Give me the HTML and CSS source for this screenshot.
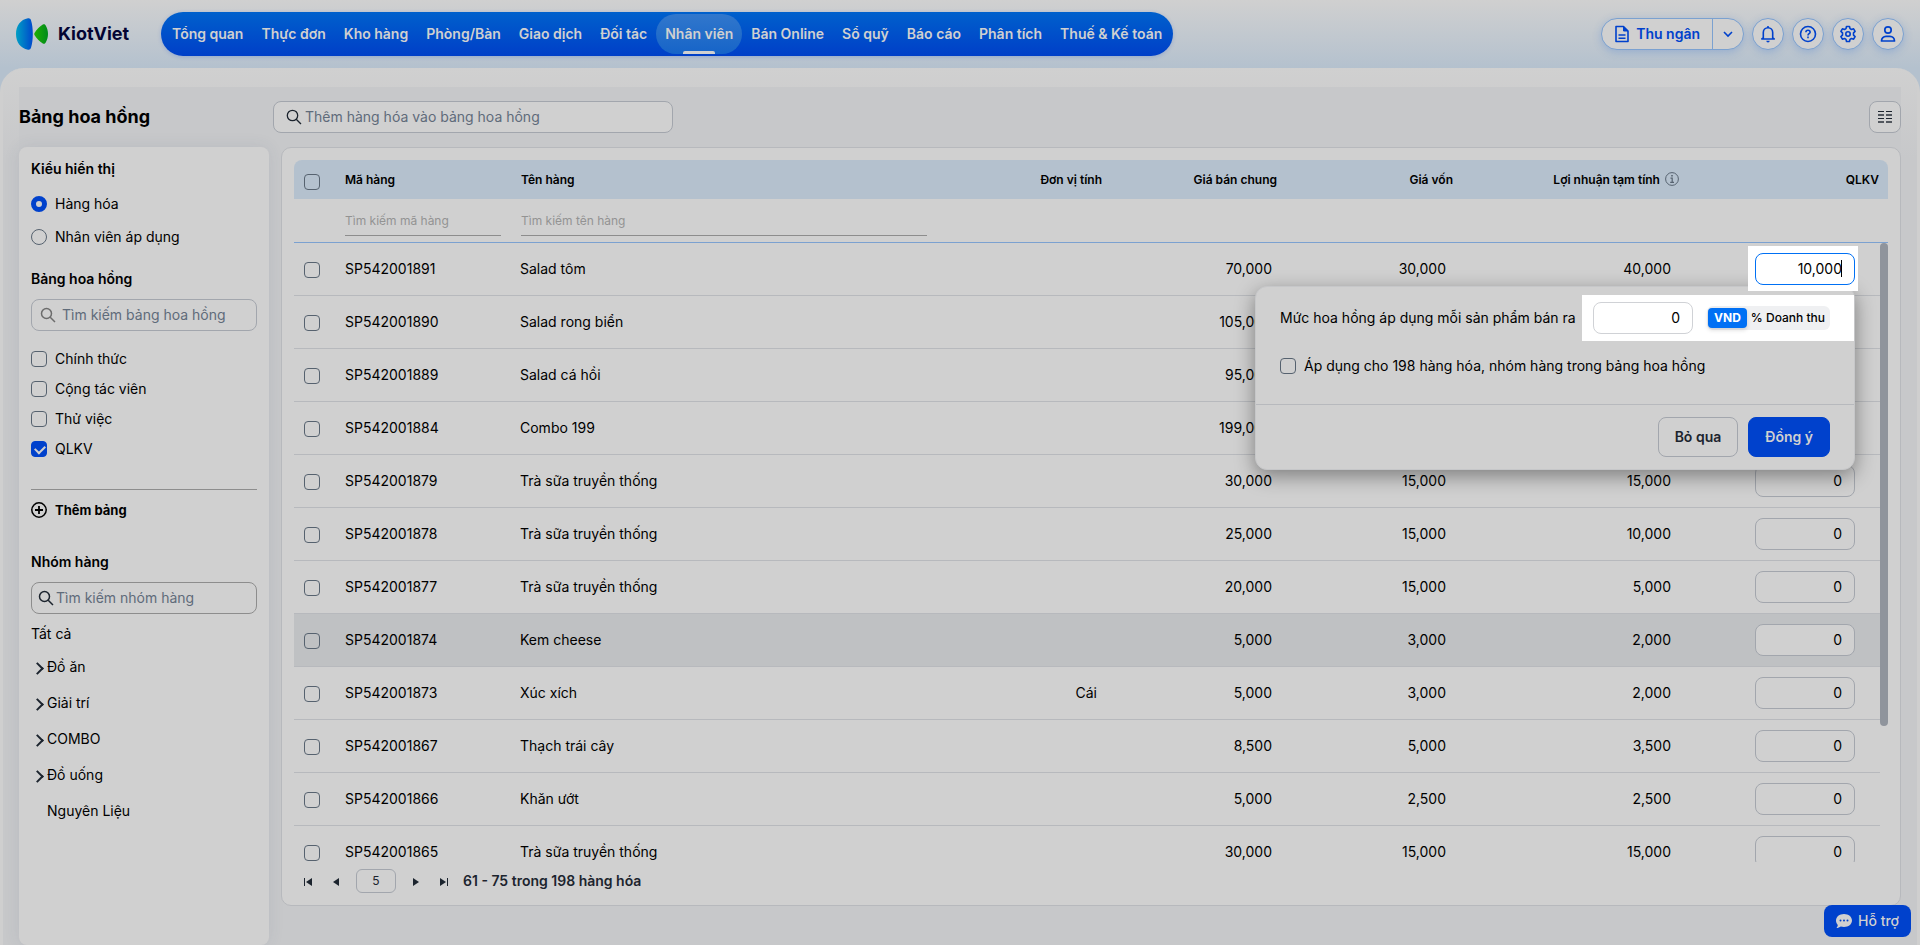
FILE: index.html
```html
<!DOCTYPE html>
<html lang="vi">
<head>
    <meta charset="UTF-8">
    <meta name="viewport" content="width=device-width, initial-scale=1.0">
    <title>KiotViet - Bảng hoa hồng</title>
    <link rel="stylesheet" href="styles.css">
</head>
<body>
    <header class="topbar">
        <a class="logo" href="#">
            <svg width="32" height="32" viewBox="0 0 32 32" aria-hidden="true">
                <defs>
                    <linearGradient id="logoBlue" x1="0" y1="0" x2="1" y2="0">
                        <stop offset="0" stop-color="#009fc4"/>
                        <stop offset="1" stop-color="#0048cc"/>
                    </linearGradient>
                    <linearGradient id="logoGreen" x1="0" y1="0" x2="1" y2="0">
                        <stop offset="0" stop-color="#1fb000"/>
                        <stop offset="1" stop-color="#008a1c"/>
                    </linearGradient>
                </defs>
                <path d="M12 .3C4.500 1.500 0 8 0 16s4.500 14.500 12 15.700c1.500.3 2.500-.4 3-1.900 1.200-3.800 1.800-8.300 1.800-13.800S16.200 6 15 2.200C14.500.7 13.500 0 12 .3z" fill="url(#logoBlue)"/>
                <path d="M18.500 15c2-3.500 5-6.600 8.300-8.500 1.200-.7 2.300-.3 2.900 1C31.200 10 32 13 32 16s-.8 6-2.300 8.500c-.6 1.300-1.700 1.700-2.900 1-3.300-1.900-6.300-5-8.300-8.500-.4-.7-.4-1.300 0-2z" fill="url(#logoGreen)"/>
            </svg>
            <span>KiotViet</span>
        </a>
        <nav class="main-nav">
            <a href="#">Tổng quan</a>
            <a href="#">Thực đơn</a>
            <a href="#">Kho hàng</a>
            <a href="#">Phòng/Bàn</a>
            <a href="#">Giao dịch</a>
            <a href="#">Đối tác</a>
            <a href="#" class="active">Nhân viên</a>
            <a href="#">Bán Online</a>
            <a href="#">Sổ quỹ</a>
            <a href="#">Báo cáo</a>
            <a href="#">Phân tích</a>
            <a href="#">Thuế &amp; Kế toán</a>
        </nav>
        <div class="top-actions">
            <div class="cashier">
                <button type="button" class="cashier-btn">
                    <svg width="16" height="18" viewBox="0 0 16 18" fill="none" stroke="currentColor" stroke-width="1.600" stroke-linejoin="round"><path d="M2 1.500h7.500L14 6v10.500H2z"/><path d="M9.500 1.500V6H14z" fill="currentColor" stroke-width="1"/><path d="M4.500 10h7M4.500 13.200h7"/></svg>
                    Thu ngân
                </button>
                <button type="button" class="cashier-more" aria-label="Mở rộng">
                    <svg width="12" height="12" viewBox="0 0 12 12" fill="none" stroke="currentColor" stroke-width="1.600"><path d="M2 4l4 4 4-4"/></svg>
                </button>
            </div>
            <button type="button" class="round-btn" aria-label="Thông báo">
                <svg width="16" height="18" viewBox="0 0 16 18" fill="none" stroke="currentColor" stroke-width="1.600" stroke-linejoin="round"><path d="M3.300 13V7.500a4.700 4.700 0 0 1 9.400 0V13l1.500 1H1.800z"/><path d="M8 1v2"/><path d="M6.300 15.800h3.400a1.700 1.700 0 0 1-3.400 0z" fill="currentColor" stroke="none"/></svg>
            </button>
            <button type="button" class="round-btn" aria-label="Trợ giúp">
                <svg width="18" height="18" viewBox="0 0 18 18" fill="none" stroke="currentColor" stroke-width="1.600"><circle cx="9" cy="9" r="7.500"/><path d="M6.900 7.300c0-1.200.9-2 2.100-2s2.100.8 2.100 1.900c0 1.500-2.100 1.600-2.100 3.200"/><path d="M9 11.600v1.600"/></svg>
            </button>
            <button type="button" class="round-btn" aria-label="Thiết lập">
                <svg width="18" height="18" viewBox="0 0 18 18" fill="none" stroke="currentColor" stroke-width="1.600" stroke-linejoin="round"><path d="M7.500 1.500h3l.5 2.100 1.500.9 2.100-.7 1.500 2.600-1.600 1.500v2.200l1.600 1.500-1.500 2.600-2.100-.7-1.500.9-.5 2.100h-3L7 14.400l-1.500-.9-2.100.7-1.500-2.600 1.600-1.500V7.900L1.900 6.400l1.500-2.600 2.100.7L7 3.600z"/><circle cx="9" cy="9" r="2.200"/></svg>
            </button>
            <button type="button" class="round-btn" aria-label="Tài khoản">
                <svg width="18" height="18" viewBox="0 0 18 18" fill="none" stroke="currentColor" stroke-width="1.700" stroke-linejoin="round"><circle cx="9" cy="5" r="3.200"/><path d="M2.500 16c0-2.800 2-4.700 4.500-4.700h4c2.500 0 4.500 1.900 4.500 4.700z"/></svg>
            </button>
        </div>
    </header>

    <main class="page">
        <div class="page-head">
            <h1>Bảng hoa hồng</h1>
            <label class="search page-search">
                <svg width="16" height="16" viewBox="0 0 16 16" fill="none" stroke="currentColor" stroke-width="1.300"><circle cx="6.500" cy="6.500" r="5.200"/><path d="M10.200 10.200L15 15"/></svg>
                <input type="text" placeholder="Thêm hàng hóa vào bảng hoa hồng" aria-label="Thêm hàng hóa vào bảng hoa hồng">
            </label>
            <button type="button" class="column-btn" aria-label="Chọn cột">
                <svg width="14" height="14" viewBox="0 0 14 14" fill="currentColor"><path d="M0 1h6v1H0zM8 1h6v1H8zM0 8h6v1H0zM8 8h6v1H8z"/><path d="M0 4h6v2H0zM8 4h6v2H8zM0 11h6v2H0zM8 11h6v2H8z" opacity=".7"/></svg>
            </button>
        </div>

        <div class="page-body">
            <aside class="sidebar">
                <section class="view-type">
                    <h2>Kiểu hiển thị</h2>
                    <label><input type="radio" name="view" checked> Hàng hóa</label>
                    <label><input type="radio" name="view"> Nhân viên áp dụng</label>
                </section>
                <section class="boards">
                    <h2>Bảng hoa hồng</h2>
                    <label class="search side-search muted">
                        <svg width="16" height="16" viewBox="0 0 16 16" fill="none" stroke="currentColor" stroke-width="1.500"><circle cx="6.500" cy="6.500" r="5"/><path d="M10.200 10.200L15 15"/></svg>
                        <input type="text" placeholder="Tìm kiếm bảng hoa hồng" aria-label="Tìm kiếm bảng hoa hồng">
                    </label>
                    <div class="board-list">
                        <label><input type="checkbox"> Chính thức</label>
                        <label><input type="checkbox"> Cộng tác viên</label>
                        <label><input type="checkbox"> Thử việc</label>
                        <label><input type="checkbox" checked> QLKV</label>
                    </div>
                    <button type="button" class="add-board">
                        <svg width="16" height="16" viewBox="0 0 16 16" fill="none" stroke="currentColor" stroke-width="1.500"><circle cx="8" cy="8" r="7.200"/><path d="M8 4v8M4 8h8" stroke-width="1.800"/></svg>
                        Thêm bảng
                    </button>
                </section>
                <section class="groups">
                    <h2>Nhóm hàng</h2>
                    <label class="search side-search tight">
                        <svg width="16" height="16" viewBox="0 0 16 16" fill="none" stroke="currentColor" stroke-width="1.500"><circle cx="6.500" cy="6.500" r="5"/><path d="M10.200 10.200L15 15"/></svg>
                        <input type="text" placeholder="Tìm kiếm nhóm hàng" aria-label="Tìm kiếm nhóm hàng">
                    </label>
                    <a href="#" class="all-groups">Tất cả</a>
                    <ul>
                        <li class="parent"><a href="#">Đồ ăn</a></li>
                        <li class="parent"><a href="#">Giải trí</a></li>
                        <li class="parent"><a href="#">COMBO</a></li>
                        <li class="parent"><a href="#">Đồ uống</a></li>
                        <li><a href="#">Nguyên Liệu</a></li>
                    </ul>
                </section>
            </aside>

            <section class="grid-card">
                <table class="grid-head">
                    <colgroup>
                        <col class="c-check"><col class="c-code"><col><col class="c-unit"><col class="c-price"><col class="c-cost"><col class="c-profit"><col class="c-board">
                    </colgroup>
                    <thead>
                        <tr class="titles">
                            <th><input type="checkbox" aria-label="Chọn tất cả"></th>
                            <th>Mã hàng</th>
                            <th class="name">Tên hàng</th>
                            <th class="num">Đơn vị tính</th>
                            <th class="num">Giá bán chung</th>
                            <th class="num">Giá vốn</th>
                            <th class="num">Lợi nhuận tạm tính
                                <svg class="info" width="14" height="14" viewBox="0 0 14 14" fill="none" stroke="currentColor"><circle cx="7" cy="7" r="6.400"/><path d="M5.500 6.200H7.200v4M5.200 10.300h3.800" stroke-width="1.200"/><path d="M7 3v1.600" stroke-width="1.600"/></svg>
                            </th>
                            <th class="num">QLKV</th>
                        </tr>
                        <tr class="filters">
                            <td></td>
                            <td><input type="text" placeholder="Tìm kiếm mã hàng" aria-label="Tìm kiếm mã hàng"></td>
                            <td class="name"><input type="text" placeholder="Tìm kiếm tên hàng" aria-label="Tìm kiếm tên hàng"></td>
                            <td colspan="5"></td>
                        </tr>
                    </thead>
                </table>

                <div class="grid-body">
                    <div class="grid-scroll">
                        <table class="grid-rows">
                            <colgroup>
                                <col class="c-check"><col class="c-code"><col><col class="c-unit"><col class="c-price"><col class="c-cost"><col class="c-profit"><col class="c-board">
                            </colgroup>
                            <tbody>
                                <tr>
                                    <td><input type="checkbox" aria-label="SP542001891"></td><td>SP542001891</td><td>Salad tôm</td><td class="num"></td><td class="num">70,000</td><td class="num">30,000</td><td class="num">40,000</td>
                                    <td class="board"><span class="editing"><input type="text" value="10,000" aria-label="Hoa hồng SP542001891"></span></td>
                                </tr>
                                <tr>
                                    <td><input type="checkbox" aria-label="SP542001890"></td><td>SP542001890</td><td>Salad rong biển</td><td class="num"></td><td class="num">105,000</td><td class="num"></td><td class="num"></td>
                                    <td class="board"><input type="text" value="0" aria-label="Hoa hồng SP542001890"></td>
                                </tr>
                                <tr>
                                    <td><input type="checkbox" aria-label="SP542001889"></td><td>SP542001889</td><td>Salad cá hồi</td><td class="num"></td><td class="num">95,000</td><td class="num"></td><td class="num"></td>
                                    <td class="board"><input type="text" value="0" aria-label="Hoa hồng SP542001889"></td>
                                </tr>
                                <tr>
                                    <td><input type="checkbox" aria-label="SP542001884"></td><td>SP542001884</td><td>Combo 199</td><td class="num"></td><td class="num">199,000</td><td class="num"></td><td class="num"></td>
                                    <td class="board"><input type="text" value="0" aria-label="Hoa hồng SP542001884"></td>
                                </tr>
                                <tr>
                                    <td><input type="checkbox" aria-label="SP542001879"></td><td>SP542001879</td><td>Trà sữa truyền thống</td><td class="num"></td><td class="num">30,000</td><td class="num">15,000</td><td class="num">15,000</td>
                                    <td class="board"><input type="text" value="0" aria-label="Hoa hồng SP542001879"></td>
                                </tr>
                                <tr>
                                    <td><input type="checkbox" aria-label="SP542001878"></td><td>SP542001878</td><td>Trà sữa truyền thống</td><td class="num"></td><td class="num">25,000</td><td class="num">15,000</td><td class="num">10,000</td>
                                    <td class="board"><input type="text" value="0" aria-label="Hoa hồng SP542001878"></td>
                                </tr>
                                <tr>
                                    <td><input type="checkbox" aria-label="SP542001877"></td><td>SP542001877</td><td>Trà sữa truyền thống</td><td class="num"></td><td class="num">20,000</td><td class="num">15,000</td><td class="num">5,000</td>
                                    <td class="board"><input type="text" value="0" aria-label="Hoa hồng SP542001877"></td>
                                </tr>
                                <tr class="hovered">
                                    <td><input type="checkbox" aria-label="SP542001874"></td><td>SP542001874</td><td>Kem cheese</td><td class="num"></td><td class="num">5,000</td><td class="num">3,000</td><td class="num">2,000</td>
                                    <td class="board"><input type="text" value="0" aria-label="Hoa hồng SP542001874"></td>
                                </tr>
                                <tr>
                                    <td><input type="checkbox" aria-label="SP542001873"></td><td>SP542001873</td><td>Xúc xích</td><td class="num">Cái</td><td class="num">5,000</td><td class="num">3,000</td><td class="num">2,000</td>
                                    <td class="board"><input type="text" value="0" aria-label="Hoa hồng SP542001873"></td>
                                </tr>
                                <tr>
                                    <td><input type="checkbox" aria-label="SP542001867"></td><td>SP542001867</td><td>Thạch trái cây</td><td class="num"></td><td class="num">8,500</td><td class="num">5,000</td><td class="num">3,500</td>
                                    <td class="board"><input type="text" value="0" aria-label="Hoa hồng SP542001867"></td>
                                </tr>
                                <tr>
                                    <td><input type="checkbox" aria-label="SP542001866"></td><td>SP542001866</td><td>Khăn ướt</td><td class="num"></td><td class="num">5,000</td><td class="num">2,500</td><td class="num">2,500</td>
                                    <td class="board"><input type="text" value="0" aria-label="Hoa hồng SP542001866"></td>
                                </tr>
                                <tr>
                                    <td><input type="checkbox" aria-label="SP542001865"></td><td>SP542001865</td><td>Trà sữa truyền thống</td><td class="num"></td><td class="num">30,000</td><td class="num">15,000</td><td class="num">15,000</td>
                                    <td class="board"><input type="text" value="0" aria-label="Hoa hồng SP542001865"></td>
                                </tr>
                            </tbody>
                        </table>
                    </div>
                    <div class="scroll-thumb"></div>

                    <div class="popup">
                        <div class="popup-row">
                            <label for="rate">Mức hoa hồng áp dụng mỗi sản phẩm bán ra</label>
                            <div class="rate">
                                <input type="text" id="rate" value="0">
                                <div class="unit-switch">
                                    <button type="button" class="on">VND</button>
                                    <button type="button">% Doanh thu</button>
                                </div>
                            </div>
                        </div>
                        <label class="apply-all"><input type="checkbox"> Áp dụng cho 198 hàng hóa, nhóm hàng trong bảng hoa hồng</label>
                        <div class="popup-foot">
                            <button type="button" class="btn">Bỏ qua</button>
                            <button type="button" class="btn primary">Đồng ý</button>
                        </div>
                    </div>
                </div>

                <div class="pager">
                    <button type="button" aria-label="Trang đầu"><svg width="8" height="8" viewBox="0 0 8 8" fill="currentColor"><path d="M0 0h1v8H0zM8 0v8L2 4z"/></svg></button>
                    <button type="button" aria-label="Trang trước"><svg width="8" height="8" viewBox="0 0 8 8" fill="currentColor"><path d="M7 0v8L1 4z"/></svg></button>
                    <input type="text" value="5" aria-label="Trang">
                    <button type="button" aria-label="Trang sau"><svg width="8" height="8" viewBox="0 0 8 8" fill="currentColor"><path d="M1 0v8l6-4z"/></svg></button>
                    <button type="button" aria-label="Trang cuối"><svg width="8" height="8" viewBox="0 0 8 8" fill="currentColor"><path d="M7 0h1v8H7zM0 0v8l6-4z"/></svg></button>
                    <span>61 - 75 trong 198 hàng hóa</span>
                </div>
            </section>
        </div>
    </main>

    <button type="button" class="support">
        <svg width="16" height="14" viewBox="0 0 16 14" aria-hidden="true"><path d="M8 0c4.500 0 8 2.800 8 6.500S12.500 13 8 13c-1.100 0-2.200-.2-3.200-.5C3.700 13.300 2 14 .4 14c.7-.8 1.300-2 1.400-3.100C.7 9.700 0 8.200 0 6.500 0 2.800 3.500 0 8 0z" fill="currentColor"/><g fill="#0041cc"><circle cx="4.500" cy="6.500" r="1"/><circle cx="8" cy="6.500" r="1"/><circle cx="11.500" cy="6.500" r="1"/></g></svg>
        Hỗ trợ
    </button>
</body>
</html>
```

FILE: styles.css
```css
* {
    box-sizing: border-box;
}
body {
    margin: 0;
    height: 100vh;
    display: flex;
    flex-direction: column;
    overflow: hidden;
    background: linear-gradient(#d0d0d0, #b4c1ce 68px);
    color: #000;
    font-family: Inter, "Noto Sans", sans-serif;
    font-size: 14px;
    line-height: 20px;
}
a {
    color: inherit;
    text-decoration: none;
}
h1, h2, ul {
    margin: 0;
    padding: 0;
}
button, input {
    font: inherit;
    color: inherit;
}
button {
    padding: 0;
    border: none;
    background: none;
    cursor: pointer;
}
svg {
    flex: none;
}

/* tick boxes and radios */
input[type="checkbox"], input[type="radio"] {
    appearance: none;
    flex: none;
    position: relative;
    width: 16px;
    height: 16px;
    margin: 0;
    border: 1px solid #56626f;
    border-radius: 4px;
    vertical-align: middle;
}
input[type="radio"] {
    border-radius: 50%;
}
input[type="radio"]:checked {
    border: 5px solid #0041cc;
}
input[type="checkbox"]:checked {
    background: #0041cc;
    border-color: #0041cc;
}
input[type="checkbox"]:checked::after {
    content: "";
    position: absolute;
    left: 3px;
    top: 3px;
    width: 8px;
    height: 5px;
    border-left: 2px solid #d0d0d0;
    border-bottom: 2px solid #d0d0d0;
    transform: rotate(-45deg);
}

/* top bar */
.topbar {
    height: 68px;
    flex: none;
    display: flex;
    align-items: center;
    padding: 0 16px;
}
.logo {
    display: flex;
    align-items: center;
    gap: 10px;
    width: 145px;
    font-size: 18px;
    font-weight: 700;
    color: #040433;
}
.main-nav {
    display: flex;
    height: 44px;
    padding: 2px;
    border-radius: 22px;
    background: linear-gradient(#0060cc, #003fc8);
    box-shadow: 0 1px 4px rgba(0, 65, 204, 0.2);
    color: #d0d0d0;
    font-weight: 600;
}
.main-nav a {
    position: relative;
    padding: 0 9px;
    line-height: 40px;
    border-radius: 20px;
    white-space: nowrap;
}
.main-nav .active {
    background: linear-gradient(#3177cc, #1664c8);
}
.main-nav .active::after {
    content: "";
    position: absolute;
    left: 50%;
    bottom: 0;
    width: 32px;
    height: 3px;
    margin-left: -16px;
    border-radius: 2px 2px 0 0;
    background: #d0d0d0;
}
.top-actions {
    margin-left: auto;
    display: flex;
    gap: 8px;
    color: #0041cc;
}
.cashier, .round-btn {
    height: 32px;
    border: 1px solid #7ba1d0;
    border-radius: 16px;
    background: #d0d0d0;
    box-shadow: 0 2px 8px rgba(60, 120, 210, 0.3);
}
.cashier {
    display: flex;
}
.cashier-btn {
    display: flex;
    align-items: center;
    gap: 6px;
    padding: 0 12px;
    font-weight: 600;
}
.cashier-more {
    width: 31px;
    border-left: 1px solid #7ba1d0;
}
.round-btn {
    width: 32px;
    display: flex;
    align-items: center;
    justify-content: center;
}
.cashier-more svg {
    display: block;
    margin: 0 auto;
}

/* page */
.page {
    flex: 1;
    min-height: 0;
    display: flex;
    flex-direction: column;
    padding: 19px 16px 0;
    border: 3px solid #cfcfcf;
    border-width: 0 3px;
    border-radius: 24px 24px 0 0;
    background: linear-gradient(#d0d0d0, #c7c8ca 90px);
}
.page-head {
    display: flex;
    align-items: center;
    height: 60px;
    flex: none;
    background: #c7c8ca;
}
.page-head h1 {
    width: 254px;
    font-size: 18px;
    font-weight: 700;
}
.search {
    display: flex;
    align-items: center;
    gap: 3px;
    height: 32px;
    padding: 0 12px;
    border: 1px solid #a2a6ad;
    border-radius: 8px;
    color: #1c242e;
}
.search input {
    flex: 1;
    min-width: 0;
    padding: 0;
    border: none;
    outline: none;
    background: none;
}
::placeholder {
    color: #5f6b7a;
    opacity: 1;
}
.page-search {
    width: 400px;
    background: #d0d0d0;
}
.column-btn {
    width: 32px;
    height: 32px;
    margin-left: auto;
    border: 1px solid #a2a6ad;
    border-radius: 8px;
    background: #d0d0d0;
    color: #1c242e;
}
.column-btn svg {
    display: block;
    margin: 0 auto;
}
.page-body {
    flex: 1;
    min-height: 0;
    display: flex;
    align-items: stretch;
    gap: 12px;
    background: #c7c8ca;
}

/* sidebar */
.sidebar {
    width: 250px;
    flex: none;
    padding: 12px;
    border-radius: 8px;
    background: #d0d0d0;
    box-shadow: 0 0 16px rgba(60, 80, 110, 0.1);
}
.sidebar h2 {
    font-size: 14px;
    line-height: 20px;
    font-weight: 600;
}
.view-type label, .board-list label {
    display: flex;
    align-items: center;
    gap: 8px;
}
.view-type label {
    height: 33px;
}
.view-type h2 {
    margin-bottom: 8px;
}
.boards {
    margin-top: 16px;
}
.side-search {
    margin-top: 10px;
    gap: 6px;
    padding: 0 8px;
}
.side-search.muted svg {
    color: #6c6c6c;
}
.side-search.tight {
    padding: 0 6px;
    gap: 2px;
    border-color: #8d8d8d;
}
.board-list {
    padding: 13px 0 25px;
    border-bottom: 1px solid #8d8d8d;
}
.board-list label {
    height: 30px;
}
.add-board {
    display: flex;
    align-items: center;
    gap: 8px;
    height: 40px;
    font-size: 13px;
    font-weight: 700;
}
.groups {
    margin-top: 22px;
}
.all-groups {
    display: block;
    margin-top: 10px;
}
.groups ul {
    margin-top: 5px;
    list-style: none;
}
.groups li {
    height: 36px;
    padding-left: 16px;
    line-height: 36px;
}
.groups .parent {
    position: relative;
}
.groups .parent::before {
    content: "";
    position: absolute;
    left: 2px;
    top: 15px;
    width: 7px;
    height: 7px;
    border-top: 2px solid #1c242e;
    border-right: 2px solid #1c242e;
    transform: rotate(45deg);
}

/* grid */
.grid-card {
    flex: 1;
    min-width: 0;
    display: flex;
    flex-direction: column;
    margin-bottom: 39px;
    padding: 12px;
    border: 1px solid #b7b9bd;
    border-radius: 10px;
    background: #d0d0d0;
}
table {
    width: 100%;
    table-layout: fixed;
    border-collapse: separate;
    border-spacing: 0;
}
th, td {
    padding: 0 8px;
    text-align: left;
    white-space: nowrap;
}
.num {
    text-align: right;
}
.c-check {
    width: 43px;
}
.c-code {
    width: 172px;
}
.c-unit, .c-price {
    width: 175px;
}
.c-cost {
    width: 176px;
}
.c-profit {
    width: 226px;
}
.c-board {
    width: 201px;
}
.grid-rows .c-cost {
    width: 174px;
}
.grid-rows .c-profit {
    width: 225px;
}
.grid-rows .c-board {
    width: 197px;
}
th:first-child, td:first-child {
    padding-left: 10px;
}
.titles th {
    height: 39px;
    background: #b4c1ce;
    font-size: 12px;
    font-weight: 600;
}
.titles th:first-child {
    padding-top: 4px;
    border-top-left-radius: 8px;
}
.titles th:last-child {
    border-top-right-radius: 8px;
    padding-right: 9px;
}
.grid-head .name {
    padding-left: 12px;
}
.info {
    margin-left: 2px;
    vertical-align: -2px;
    color: #56626f;
}
.filters td {
    height: 44px;
    border-bottom: 1px solid #7ba1d0;
}
.filters input {
    display: block;
    width: 100%;
    height: 30px;
    padding: 0;
    border: none;
    border-bottom: 1px solid #8d8d8d;
    background: none;
    font-size: 12px;
}
.filters ::placeholder {
    color: #939393;
}
.grid-body {
    flex: 1;
    min-height: 0;
    position: relative;
}
.grid-scroll {
    height: 100%;
    overflow: hidden;
    padding-right: 8px;
}
.scroll-thumb {
    position: absolute;
    top: 0;
    right: 0;
    width: 8px;
    height: 78%;
    border-radius: 4px;
    background: #8f949c;
}
.grid-rows td {
    height: 53px;
    border-bottom: 1px solid #b7b9bd;
}
.grid-rows td:nth-child(3) {
    padding-left: 11px;
}
.grid-rows .num {
    padding-right: 12px;
}
.grid-rows .board {
    padding-right: 25px;
    text-align: right;
}
.hovered td {
    background: #bfc1c3;
}
.board input, .rate input {
    display: inline-block;
    width: 100px;
    height: 32px;
    padding: 0 12px 1px;
    border: 1px solid #a2a6ad;
    border-radius: 8px;
    background: #d0d0d0;
    text-align: right;
    vertical-align: middle;
}
.editing {
    display: inline-block;
    position: relative;
    z-index: 3;
    vertical-align: middle;
}
.editing::before {
    content: "";
    position: absolute;
    z-index: -1;
    inset: -7px -3px -6px -7px;
    background: #fff;
}
.editing::after {
    content: "";
    position: absolute;
    top: 7px;
    right: 13px;
    width: 1px;
    height: 17px;
    background: #000;
}
.board .editing input {
    display: block;
    border-color: #0070f4;
    background: #fff;
}

/* commission popup */
.popup {
    position: absolute;
    z-index: 2;
    top: 43px;
    right: 33px;
    width: 600px;
    padding-top: 8px;
    border: 1px solid #c6c7c9;
    border-radius: 12px;
    background: #d0d0d0;
    box-shadow: 0 6px 20px rgba(0, 0, 0, 0.4);
}
.popup-row {
    display: flex;
    align-items: center;
    justify-content: space-between;
    padding-left: 24px;
}
.rate {
    display: flex;
    align-items: center;
    gap: 14px;
    height: 46px;
    padding: 0 24px 0 11px;
    background: #fff;
}
.rate input {
    border-color: #d0d2d6;
    background: #fff;
}
.unit-switch {
    display: flex;
    padding: 2px 1px;
    border-radius: 6px;
    background: #eff0f2;
    font-size: 12px;
    font-weight: 500;
}
.unit-switch button {
    height: 20px;
    padding: 0 4px;
    border-radius: 4px;
}
.unit-switch .on {
    padding: 0 6px;
    background: #0070f4;
    color: #fff;
    font-weight: 700;
    box-shadow: 0 2px 4px rgba(0, 0, 0, 0.15);
}
.apply-all {
    display: flex;
    align-items: center;
    gap: 8px;
    height: 63px;
    padding: 0 24px 14px;
}
.popup-foot {
    display: flex;
    justify-content: flex-end;
    gap: 10px;
    padding: 12px 24px;
    border-top: 1px solid #b7b9bd;
}
.btn {
    height: 40px;
    padding: 0 16px;
    border: 1px solid #a2a6ad;
    border-radius: 8px;
    font-weight: 600;
    color: #1c242e;
}
.btn.primary {
    border-color: #0041cc;
    background: #0041cc;
    color: #d0d0d0;
}

/* pager */
.pager {
    display: flex;
    align-items: center;
    height: 31px;
    padding-top: 6px;
    color: #1c242e;
}
.pager button {
    width: 28px;
    height: 24px;
}
.pager input {
    width: 40px;
    height: 24px;
    margin: 0 6px;
    padding: 0;
    border: 1px solid #a2a6ad;
    border-radius: 6px;
    background: none;
    text-align: center;
    font-size: 12px;
}
.pager span {
    margin-left: 5px;
    font-weight: 600;
}
.support {
    position: fixed;
    right: 9px;
    bottom: 8px;
    display: flex;
    align-items: center;
    gap: 6px;
    height: 32px;
    padding: 0 12px;
    border-radius: 8px;
    background: #0041cc;
    color: #d0d0d0;
    font-weight: 500;
}
```
